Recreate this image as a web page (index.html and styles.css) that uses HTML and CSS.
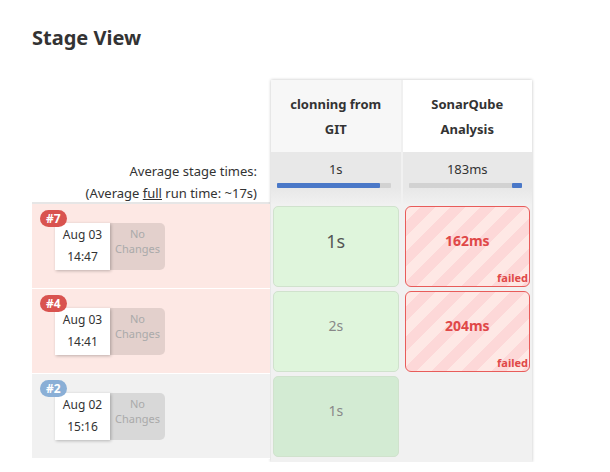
FILE: index.html
```html
<!DOCTYPE html>
<html>
<head>
<meta charset="utf-8">
<link rel="stylesheet" href="styles.css">
</head>
<body>
<h1 class="title">Stage View</h1>
<div class="view">
  <div class="runs">
    <div class="runs-head"></div>
    <div class="runs-avg">
      <div>Average stage times:</div>
      <div>(Average <u>full</u> run time: ~17s)</div>
    </div>
    <div class="run run-failed">
      <span class="badge badge-red">#7</span>
      <div class="run-info">
        <div class="date"><div>Aug 03</div><div>14:47</div></div>
        <div class="changes">No<br>Changes</div>
      </div>
    </div>
    <div class="run run-failed">
      <span class="badge badge-red">#4</span>
      <div class="run-info">
        <div class="date"><div>Aug 03</div><div>14:41</div></div>
        <div class="changes">No<br>Changes</div>
      </div>
    </div>
    <div class="run run-ok">
      <span class="badge badge-blue">#2</span>
      <div class="run-info">
        <div class="date"><div>Aug 02</div><div>15:16</div></div>
        <div class="changes">No<br>Changes</div>
      </div>
    </div>
  </div>
  <div class="stages">
    <div class="srow">
      <div class="shead shead-a">clonning from<br>GIT</div>
      <div class="shead shead-b">SonarQube<br>Analysis</div>
    </div>
    <div class="srow">
      <div class="savg">1s<div class="bar"><div class="fill" style="width:91%"></div></div></div>
      <div class="savg">183ms<div class="bar bar-right"><div class="fill" style="width:9%"></div></div></div>
    </div>
    <div class="srow row">
      <div class="cell"><div class="box ok big">1s</div></div>
      <div class="cell"><div class="box fail">162ms<span class="failed">failed</span></div></div>
    </div>
    <div class="srow row">
      <div class="cell"><div class="box ok">2s</div></div>
      <div class="cell"><div class="box fail">204ms<span class="failed">failed</span></div></div>
    </div>
    <div class="srow row">
      <div class="cell"><div class="box ok dark">1s</div></div>
      <div class="cell empty"></div>
    </div>
  </div>
</div>
</body>
</html>
```

FILE: styles.css
```css
* { box-sizing: border-box; }
body {
  margin: 0;
  background: #fff;
  font-family: "Noto Sans", "DejaVu Sans", sans-serif;
  color: #333;
}
.title {
  margin: 0;
  padding: 24px 0 0 32px;
  height: 80px;
  font-size: 20px;
  font-weight: bold;
  color: #333;
}
.view {
  display: flex;
  padding-left: 32px;
}
.runs {
  width: 238px;
  display: flex;
  flex-direction: column;
}
.runs-head { height: 72px; }
.runs-avg {
  height: 52px;
  text-align: right;
  padding: 8px 13px 0 0;
  font-size: 13px;
  line-height: 22px;
  border-bottom: 2px solid #e6e6e6;
}
.run {
  position: relative;
  height: 85px;
  border-bottom: 1px solid #fff;
}
.run-failed { background: #fde8e4; }
.run-ok { background: #f1f1f1; }
.badge {
  position: absolute;
  left: 8px;
  top: 6px;
  height: 17px;
  padding: 0 6px;
  border-radius: 9px;
  color: #fff;
  font-size: 12px;
  font-weight: bold;
  line-height: 17px;
  z-index: 1;
}
.badge-red { background: #d9534f; }
.badge-blue { background: #8aafd6; }
.run-info {
  display: flex;
  margin: 19px 0 0 23px;
  height: 47px;
}
.date {
  width: 55px;
  background: #fff;
  box-shadow: 1px 1px 3px rgba(0,0,0,0.25);
  font-size: 12px;
  text-align: center;
  line-height: 22px;
  padding-top: 1px;
  position: relative;
}
.changes {
  width: 55px;
  background: rgba(0,0,0,0.1);
  border-radius: 0 5px 5px 0;
  color: #aaa;
  font-size: 11px;
  text-align: center;
  line-height: 15px;
  padding-top: 3px;
}
.stages {
  width: 261px;
  margin-left: 1px;
  box-shadow: 0 0 3px rgba(0,0,0,0.25);
  background: #f1f1f1;
  display: flex;
  flex-direction: column;
  padding-bottom: 3px;
}
.srow {
  display: flex;
  gap: 2px;
}
.shead {
  flex: 1;
  height: 72px;
  display: flex;
  align-items: center;
  justify-content: center;
  text-align: center;
  font-size: 13px;
  font-weight: bold;
  line-height: 25px;
  padding-top: 2px;
}
.shead-a { background: #f7f7f7; }
.shead-b { background: #fff; }
.srow:first-child { background: #f0f0f0; }
.savg {
  flex: 1;
  height: 52px;
  background: linear-gradient(#e8e8e8, #e8e8e8 70%, #f0f0f0);
  text-align: center;
  font-size: 13px;
  padding-top: 9px;
  line-height: 17px;
}
.bar {
  margin: 5px 10px 0 6px;
  height: 5px;
  background: #d2d2d2;
  border-radius: 1px;
  display: flex;
}
.bar-right { justify-content: flex-end; }
.fill {
  height: 5px;
  background: #4a78c8;
  border-radius: 1px;
}
.row .cell, .row .empty {
  flex: 1;
  height: 85px;
  padding: 2px;
}
.box {
  height: 100%;
  border-radius: 5px;
  display: flex;
  align-items: center;
  justify-content: center;
  position: relative;
  font-size: 14px;
  padding-bottom: 12px;
}
.ok {
  background: #dff5dc;
  border: 1px solid #d0e2cd;
  color: #888;
}
.ok.big { font-size: 18px; color: #555; }
.ok.dark { background: #d3ebd3; }
.fail {
  border: 1px solid #e85c5a;
  border-radius: 6px;
  color: #e04848;
  font-weight: bold;
  background: repeating-linear-gradient(135deg, #fee8e5 0, #fee8e5 10.6px, #fdd8d8 10.6px, #fdd8d8 21.2px);
}
.failed {
  position: absolute;
  right: 1px;
  bottom: 1px;
  font-size: 11px;
  line-height: 14px;
}
.empty { background: #f1f1f1; }
```
